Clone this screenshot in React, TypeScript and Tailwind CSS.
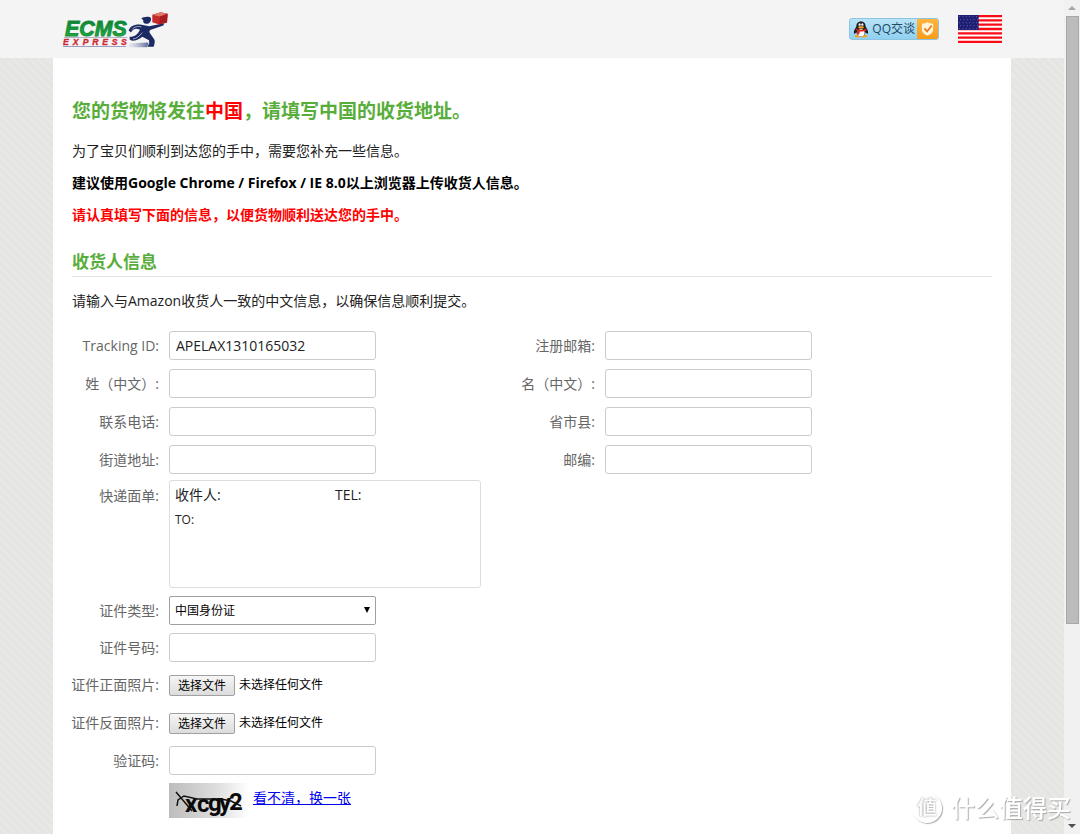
import React, { useId, useRef, useState } from "react";

const field =
  "h-[29px] w-[207px] rounded-[3px] border border-[#cccccc] bg-white px-[6px] text-[14px] text-[#222222] outline-none focus:border-[#58ad3b]";

function Logo() {
  return (
    <svg viewBox="69 30 318 110" className="h-[37px] w-[106px]" role="img" aria-label="ECMS Express">
      <defs>
        <linearGradient id="word" x1="0" y1="0" x2="0" y2="1">
          <stop offset="0" stopColor="#0f6b3a" />
          <stop offset="0.5" stopColor="#159a3c" />
          <stop offset="1" stopColor="#2eae3a" />
        </linearGradient>
        <linearGradient id="speed" x1="0" y1="0" x2="1" y2="0">
          <stop offset="0" stopColor="#c9cde2" stopOpacity="0.3" />
          <stop offset="1" stopColor="#5b6499" />
        </linearGradient>
      </defs>
      <text
        x="75"
        y="104"
        fill="url(#word)"
        stroke="#14903b"
        strokeWidth="3"
        fontFamily="Liberation Sans, Arial, sans-serif"
        fontSize="64"
        fontWeight="700"
        fontStyle="italic"
      >
        ECMS
      </text>
      <path d="M72 109H262" stroke="#8d94b8" strokeWidth="2" />
      <text
        x="69 98 128 157 187 215 243"
        y="131"
        fill="#cf2630"
        stroke="#cf2630"
        strokeWidth="1"
        fontFamily="Liberation Sans, Arial, sans-serif"
        fontSize="26"
        fontWeight="700"
        fontStyle="italic"
      >
        EXPRESS
      </text>
      <path d="M69 136H258" stroke="#9a9fc0" strokeWidth="3" />
      <path d="M268 126L326 124L321 138H266Z" fill="url(#speed)" />
      <path d="M304 52C309 46 330 44 333 51C334 61 328 68 319 68C311 67 308 62 310 57Z" fill="#1b2a62" />
      <path
        d="M266 88C269 77 281 69 300 70L328 75L353 70L373 66L370 73L337 84C328 86 327 91 330 96L343 115C346 120 343 130 341 137H322L328 126L327 117L307 107C299 113 290 119 276 119L269 115L269 107C283 108 293 100 300 86C289 80 280 81 273 94Z"
        fill="#1b2a62"
      />
      <path d="M276 85C283 76 293 75 304 77M279 113C291 113 298 104 307 94" stroke="#e7e9f3" strokeWidth="2" fill="none" />
      <path d="M337 41L362 33L383 38L381 64L357 70L337 63Z" fill="#c52b28" />
      <path d="M337 41L362 33L383 38L360 46Z" fill="#e0786a" />
      <path d="M360 46L383 38L381 64L357 70Z" fill="#a91d20" />
    </svg>
  );
}

function Penguin() {
  return (
    <svg viewBox="0 0 48 50" className="h-[17px] w-[16px]" aria-hidden="true">
      <ellipse cx="14" cy="45" rx="9" ry="4" fill="#f4a61c" />
      <ellipse cx="34" cy="45" rx="9" ry="4" fill="#f4a61c" />
      <path d="M24 1C14 1 10 8 10 17C6 23 1 31 3 37C5 39 8 35 10 33C12 41 17 46 24 46S36 41 38 33C40 35 43 39 45 37C47 31 42 23 38 17C38 8 34 1 24 1Z" fill="#1b1b22" />
      <ellipse cx="24" cy="35" rx="11" ry="11" fill="#fff" />
      <ellipse cx="20" cy="11" rx="3.5" ry="5" fill="#fff" />
      <ellipse cx="28" cy="11" rx="3.5" ry="5" fill="#fff" />
      <circle cx="21" cy="12" r="1.5" />
      <circle cx="27" cy="12" r="1.5" />
      <ellipse cx="24" cy="19" rx="9" ry="3.5" fill="#f4a61c" />
      <path d="M9 21C17 28 31 28 39 21L41 27C34 31 26 32 20 31L19 40L12 39L13 29L8 26Z" fill="#e2231a" />
    </svg>
  );
}

function Flag() {
  const stars = [];
  for (let r = 0; r < 5; r++) {
    for (let c = 0; c < 6; c++) {
      stars.push(<circle key={`${r}-${c}`} cx={5 + c * 10 + (r % 2) * 3} cy={5 + r * 9} r="1.4" fill="#9a9ccb" />);
    }
  }
  return (
    <svg viewBox="0 0 132 84" className="h-[28px] w-[44px]" aria-hidden="true">
      <rect width="132" height="84" fill="#fff" />
      <path
        d="M0 3.2H132M0 16.1H132M0 29.1H132M0 42H132M0 54.9H132M0 67.8H132M0 80.8H132"
        stroke="#f90a14"
        strokeWidth="7"
      />
      <rect width="62" height="45" fill="#1e1f73" />
      {stars}
    </svg>
  );
}

function Captcha() {
  return (
    <svg viewBox="0 0 80 35" className="h-[35px] w-[80px]" role="img" aria-label="xcgy2">
      <defs>
        <linearGradient id="fade" x1="0" y1="0" x2="1" y2="0">
          <stop offset="0" stopColor="#bcbcbc" />
          <stop offset="0.6" stopColor="#dedede" />
          <stop offset="1" stopColor="#ffffff" />
        </linearGradient>
      </defs>
      <rect width="80" height="35" fill="url(#fade)" />
      <text x="16 28 39 50 60" y="29 29 28 28 27" fontFamily="Roboto, sans-serif" fontSize="24" fontWeight="700" fill="#0a0a0a">
        xcgy2
      </text>
      <path d="M7 9L18 22L23 28M8 23L9 17L15 13L28 16L52 16L62 18L72 23" fill="none" stroke="#111" strokeWidth="1.5" />
    </svg>
  );
}

function Row({ label, htmlFor, top, children }: { label: string; htmlFor?: string; top?: boolean; children: React.ReactNode }) {
  return (
    <div className={top ? "flex items-start gap-[10px]" : "flex items-center gap-[10px]"}>
      <label
        htmlFor={htmlFor}
        className={
          top
            ? "flex w-[87px] shrink-0 justify-end whitespace-nowrap pt-[6px] leading-5 text-[#666666]"
            : "flex w-[87px] shrink-0 justify-end whitespace-nowrap leading-5 text-[#666666]"
        }
      >
        {label}
      </label>
      {children}
    </div>
  );
}

function TextRow({ label, value }: { label: string; value?: string }) {
  const id = useId();
  return (
    <Row label={label} htmlFor={id}>
      <input id={id} type="text" defaultValue={value} className={field} />
    </Row>
  );
}

function FileRow({ label }: { label: string }) {
  const id = useId();
  const input = useRef<HTMLInputElement>(null);
  const [name, setName] = useState("未选择任何文件");
  return (
    <Row label={label} htmlFor={id}>
      <div className="flex h-[30px] items-center gap-1 text-[12px] text-black">
        <input
          id={id}
          ref={input}
          type="file"
          className="hidden"
          onChange={(e) => setName(e.target.files?.[0]?.name ?? "未选择任何文件")}
        />
        <button
          type="button"
          onClick={() => input.current?.click()}
          className="h-[21px] w-[66px] rounded-[2px] border border-[#a0a0a0] bg-linear-to-b from-[#f6f6f6] to-[#dcdcdc] leading-5"
        >
          选择文件
        </button>
        <span>{name}</span>
      </div>
    </Row>
  );
}

export default function App() {
  return (
    <div className="flex min-h-screen bg-[#f1f1f1] font-['Open_Sans','Noto_Sans_CJK_SC',sans-serif] text-[14px] text-[#222222]">
      <div className="flex min-w-0 flex-1 flex-col bg-[#e6e7e3] bg-[repeating-linear-gradient(45deg,#e5e6e4_0px,#e5e6e4_4px,#ecece4_5px,#e5e6e4_6px)]">
        <header className="bg-[#f4f4f4]">
          <div className="mx-auto flex h-[58px] w-full max-w-[958px] items-center justify-between pl-[10px] pr-[9px]">
            <a href="#home">
              <Logo />
            </a>
            <div className="flex items-center gap-[19px]">
              <button
                type="button"
                className="flex h-[22px] w-[90px] items-center overflow-hidden rounded-[3px] border border-[#8cc4e2] bg-linear-to-b from-[#b9e3f8] to-[#8fd0f0] text-[12px] text-[#1d4a63]"
              >
                <span className="flex flex-1 items-center justify-between pl-[3px] pr-[2px]">
                  <Penguin />
                  <span className="whitespace-nowrap">QQ交谈</span>
                </span>
                <span className="flex h-full w-[21px] items-center justify-center bg-linear-to-b from-[#fdb53e] to-[#f99b17]">
                  <svg viewBox="0 0 36 40" className="h-[14px] w-[13px]" aria-hidden="true">
                    <path d="M2 5C9 5 14 3 18 1C22 3 27 5 34 5V22C34 30 26 36 18 39C10 36 2 30 2 22Z" fill="#fff4dc" />
                    <path d="M9 18L17 27L30 10" fill="none" stroke="#ee7a12" strokeWidth="5" />
                  </svg>
                </span>
              </button>
              <a href="#en" aria-label="English">
                <Flag />
              </a>
            </div>
          </div>
        </header>

        <main className="mx-auto w-full max-w-[958px] flex-1 bg-white px-[19px] pt-[39px]">
          <h1 className="text-[19px] font-bold leading-7 text-[#58ad3b]">
            您的货物将发往<span className="text-[#ff0000]">中国</span>，请填写中国的收货地址。
          </h1>
          <div className="mt-4 flex flex-col gap-3 leading-5">
            <p>为了宝贝们顺利到达您的手中，需要您补充一些信息。</p>
            <p className="font-bold text-black">建议使用Google Chrome / Firefox / IE 8.0以上浏览器上传收货人信息。</p>
            <p className="font-bold text-[#ff0000]">请认真填写下面的信息，以便货物顺利送达您的手中。</p>
          </div>

          <h2 className="mt-[23px] border-b border-[#e5e5e5] text-[17px] font-bold leading-7 text-[#58ad3b]">收货人信息</h2>
          <p className="mt-[14px] leading-5">请输入与Amazon收货人一致的中文信息，以确保信息顺利提交。</p>

          <form className="mt-5" onSubmit={(e) => e.preventDefault()}>
            <div className="grid grid-cols-[436px_1fr] gap-y-[9px]">
              <TextRow label="Tracking ID:" value="APELAX1310165032" />
              <TextRow label="注册邮箱:" />
              <TextRow label="姓（中文）:" />
              <TextRow label="名（中文）:" />
              <TextRow label="联系电话:" />
              <TextRow label="省市县:" />
              <TextRow label="街道地址:" />
              <TextRow label="邮编:" />
            </div>

            <div className="mt-[6px] flex flex-col gap-2">
              <Row label="快递面单:" top>
                <div className="h-[108px] w-[312px] rounded-[3px] border border-[#dddddd] px-[5px] pt-1">
                  <div className="grid grid-cols-[160px_1fr] leading-5">
                    <span>收件人:</span>
                    <span>TEL:</span>
                  </div>
                  <div className="mt-[5px] text-[12px] leading-5">TO:</div>
                </div>
              </Row>
              <Row label="证件类型:" htmlFor="id-type">
                <div className="relative">
                  <select
                    id="id-type"
                    className="block h-[29px] w-[207px] appearance-none rounded-[2px] border border-[#a0a0a0] bg-white px-[5px] text-[12px] text-black"
                  >
                    <option>中国身份证</option>
                  </select>
                  <svg viewBox="0 0 6 6" className="pointer-events-none absolute right-[6px] top-[11px] h-[6px] w-[6px]" aria-hidden="true">
                    <path d="M0 0H6L3 6Z" />
                  </svg>
                </div>
              </Row>
              <TextRow label="证件号码:" />
              <FileRow label="证件正面照片:" />
              <FileRow label="证件反面照片:" />
              <TextRow label="验证码:" />
              <div className="flex items-start gap-1 pl-[97px]">
                <Captcha />
                <a href="#refresh" className="pt-[5px] leading-5 text-[#0000ee] underline">
                  看不清，换一张
                </a>
              </div>
            </div>
          </form>
        </main>
      </div>

      <div className="flex w-[16px] shrink-0 flex-col items-center justify-between py-[6px]" aria-hidden="true">
        <div className="flex w-full flex-1 flex-col items-center">
          <svg viewBox="0 0 8 4" className="h-[4px] w-[8px]">
            <path d="M0 4L4 0L8 4Z" fill="#a3a3a3" />
          </svg>
          <div className="mt-[6px] h-[608px] w-[13px] border border-[#a8a8a8] bg-[#bcbcbc]" />
        </div>
        <svg viewBox="0 0 8 4" className="h-[4px] w-[8px]">
          <path d="M0 0L4 4L8 0Z" fill="#505050" />
        </svg>
      </div>

      <div className="pointer-events-none fixed bottom-[10px] right-[9px] flex items-center gap-[9px] text-white [text-shadow:1px_1px_1px_#aaaaaa]">
        <span className="flex size-[30px] items-center justify-center rounded-full border border-white text-[20px] font-medium leading-none shadow-[1px_1px_1px_#aaaaaa] [text-shadow:0px_0px_2px_#888888]">
          値
        </span>
        <span className="text-[24px] font-medium leading-8">什么值得买</span>
      </div>
    </div>
  );
}
